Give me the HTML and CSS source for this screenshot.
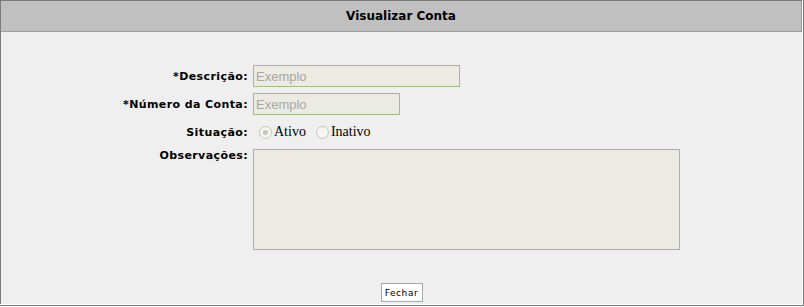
FILE: index.html
```html
<!DOCTYPE html>
<html lang="pt-BR">
<head>
    <meta charset="UTF-8">
    <title>Visualizar Conta</title>
    <link rel="stylesheet" href="styles.css">
</head>
<body>
    <div class="frame">
        <div class="panel">
            <div class="panel-title">Visualizar Conta</div>
            <div class="form">
                <label class="lbl">*Descrição:</label>
                <div class="field"><input class="txt txt-long" type="text" placeholder="Exemplo" disabled></div>

                <label class="lbl">*Número da Conta:</label>
                <div class="field"><input class="txt txt-short" type="text" placeholder="Exemplo" disabled></div>

                <label class="lbl">Situação:</label>
                <div class="field radios">
                    <span class="radio on"></span><span class="opt">Ativo</span>
                    <span class="radio"></span><span class="opt">Inativo</span>
                </div>

                <label class="lbl lbl-top">Observações:</label>
                <div class="field"><textarea class="area" disabled></textarea></div>
            </div>
            <div class="actions">
                <button class="btn" type="button">Fechar</button>
            </div>
        </div>
    </div>
</body>
</html>
```

FILE: styles.css
```css
body{
    margin: 0;
    background-color: #ffffff;
}
.frame{
    width: 804px;
    height: 306px;
    border: 1px solid #7b7b7b;
    border-top: 0;
    border-left: 0;
    padding: 0 1px 1px 0;
    box-sizing: border-box;
    background-color: #ffffff;
}
.panel{
    height: 100%;
    border-left: 1px solid #7b7b7b;
    border-top: 1px solid #7b7b7b;
    background-color: #efefef;
    box-sizing: border-box;
    display: flex;
    flex-direction: column;
}
.panel-title{
    height: 30px;
    line-height: 30px;
    background-color: #c0c0c0;
    border: 1px solid #9c9c9c;
    border-top: 0;
    border-left: 0;
    text-align: center;
    font-family: "DejaVu Sans", Verdana, sans-serif;
    font-weight: bold;
    font-size: 12px;
    color: #000;
}

.form{
    display: grid;
    grid-template-columns: 247px auto;
    column-gap: 5px;
    row-gap: 6px;
    padding-top: 33px;
    align-items: center;
}
.lbl{
    text-align: right;
    font-family: "DejaVu Sans", Verdana, sans-serif;
    font-weight: bold;
    font-size: 11px;
    letter-spacing: 0.4px;
    color: #000;
}
.lbl-top{
    align-self: start;
    padding-top: 0;
}
.field{
    display: flex;
    align-items: center;
}
.txt{
    height: 22px;
    box-sizing: border-box;
    border: 1px solid #a4bb87;
    background-color: #ebeae3;
    padding: 0 2px;
    font-family: "Liberation Sans", Arial, sans-serif;
    font-size: 13px;
    color: #a0a0a0;
}
.txt::placeholder{
    color: #a8a8a0;
}
.txt-long{ width: 207px; }
.txt-short{ width: 147px; }

.radios{
    height: 22px;
    font-family: "Liberation Serif", "Times New Roman", serif;
    font-size: 14px;
    color: #000;
}
.radio{
    width: 11px;
    height: 11px;
    border: 1px solid #c8c8c0;
    border-radius: 50%;
    background-color: #f4f4f0;
    margin: 0 2px 0 6px;
    position: relative;
}
.radio.on::after{
    content: "";
    position: absolute;
    left: 3px;
    top: 3px;
    width: 5px;
    height: 5px;
    border-radius: 50%;
    background-color: #c4c4bc;
}
.opt + .radio{
    margin-left: 10px;
}
.area{
    width: 427px;
    height: 101px;
    box-sizing: border-box;
    border: 1px solid #a4bb87;
    background-color: #ebeae3;
    resize: none;
    margin: 0;
}
.actions{
    margin-top: auto;
    padding-bottom: 2px;
    text-align: center;
}
.btn{
    width: 42px;
    height: 19px;
    padding: 0;
    border: 1px solid #a8a8a8;
    background-color: #ffffff;
    font-family: "DejaVu Sans", Verdana, sans-serif;
    font-size: 9px;
    letter-spacing: 0.6px;
    color: #000;
}
```
